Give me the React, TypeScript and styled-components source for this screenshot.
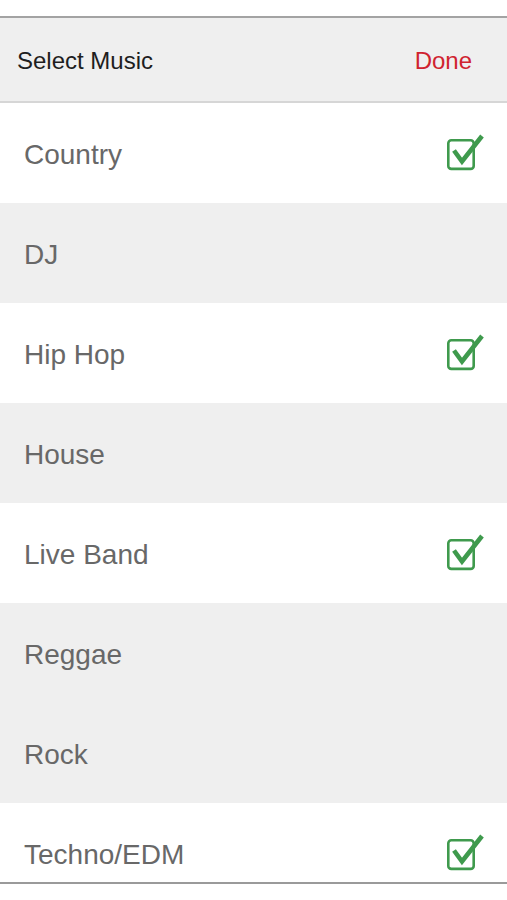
import { createGlobalStyle, styled } from "styled-components";

const GlobalStyle = createGlobalStyle`
  html, body {
    margin: 0;
    padding: 0;
    background: #fff;
  }
  body {
    font-family: "Liberation Sans", Arial, sans-serif;
  }
`;

interface Genre {
  name: string;
  checked: boolean;
  shade: boolean;
}

const genres: Genre[] = [
  { name: "Country", checked: true, shade: false },
  { name: "DJ", checked: false, shade: true },
  { name: "Hip Hop", checked: true, shade: false },
  { name: "House", checked: false, shade: true },
  { name: "Live Band", checked: true, shade: false },
  { name: "Reggae", checked: false, shade: true },
  { name: "Rock", checked: false, shade: true },
  { name: "Techno/EDM", checked: true, shade: false },
];

const CheckIcon = () => (
  <svg width="37" height="37" viewBox="0 0 37 37">
    <rect
      x="1.3"
      y="6.3"
      width="25.4"
      height="28.6"
      rx="3"
      fill="none"
      stroke="#3f9a4d"
      strokeWidth="2.6"
    />
    <path
      d="M7 16.5 L15 27.5 L35 2"
      fill="none"
      stroke="#3f9a4d"
      strokeWidth="4.6"
      strokeLinejoin="miter"
    />
  </svg>
);

const App = () => {
  return (
    <>
      <GlobalStyle />
      <Page>
        <Sheet>
          <Header>
            <Title>Select Music</Title>
            <Done>Done</Done>
          </Header>
          <List>
            {genres.map((g) => (
              <Row key={g.name} $shade={g.shade}>
                <Label>{g.name}</Label>
                {g.checked && (
                  <Check>
                    <CheckIcon />
                  </Check>
                )}
              </Row>
            ))}
          </List>
        </Sheet>
      </Page>
    </>
  );
};

export default App;

const Page = styled.div`
  width: 507px;
  height: 900px;
  padding-top: 16px;
  box-sizing: border-box;
  background: #fff;
`;

const Sheet = styled.div`
  border-top: 2px solid #a3a3a3;
  border-bottom: 2px solid #9a9a9a;
`;

const Header = styled.div`
  height: 85px;
  background: #efefef;
  border-bottom: 2px solid #d6d6d6;
  display: flex;
  align-items: center;
  justify-content: space-between;
  padding: 2px 35px 0 17px;
  box-sizing: border-box;
`;

const Title = styled.div`
  color: #1e1e1e;
  font-size: 24px;
`;

const Done = styled.div`
  color: #d0232f;
  font-size: 24px;
`;

const List = styled.div`
  height: 779px;
  overflow: hidden;
`;

const Row = styled.div<{ $shade: boolean }>`
  height: 100px;
  background: ${(p) => (p.$shade ? "#efefef" : "#fff")};
  display: flex;
  align-items: center;
  justify-content: space-between;
  padding: 0 23px 0 24px;
  box-sizing: border-box;
`;

const Label = styled.div`
  color: #686868;
  font-size: 28px;
  margin-top: 4px;
`;

const Check = styled.div`
  display: flex;
  margin-top: -1px;
`;
